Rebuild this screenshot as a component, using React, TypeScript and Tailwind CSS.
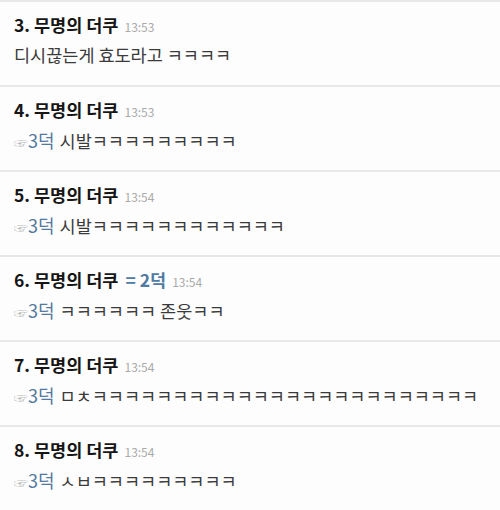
import React from 'react';

type Comment = {
  no: number;
  time: string;
  reply?: string;
  body: string;
};

const comments: Comment[] = [
  { no: 3, time: '13:53', body: '디시끊는게 효도라고 ㅋㅋㅋㅋ' },
  { no: 4, time: '13:53', reply: '3덕', body: '시발ㅋㅋㅋㅋㅋㅋㅋㅋㅋ' },
  { no: 5, time: '13:54', reply: '3덕', body: '시발ㅋㅋㅋㅋㅋㅋㅋㅋㅋㅋㅋㅋ' },
  { no: 6, time: '13:54', reply: '3덕', body: 'ㅋㅋㅋㅋㅋㅋ 존웃ㅋㅋ' },
  { no: 7, time: '13:54', reply: '3덕', body: 'ㅁㅊㅋㅋㅋㅋㅋㅋㅋㅋㅋㅋㅋㅋㅋㅋㅋㅋㅋㅋㅋㅋㅋㅋㅋㅋ' },
  { no: 8, time: '13:54', reply: '3덕', body: 'ㅅㅂㅋㅋㅋㅋㅋㅋㅋㅋㅋ' },
];

const CommentRow: React.FC<{ c: Comment }> = ({ c }) => (
  <div className="h-[85px] border-t-2 border-[#e8e8e8] pl-[14px] pt-[10px]">
    <div className="flex items-baseline leading-[26px]">
      <span className="text-[17.5px] font-bold text-[#161616]">
        {c.no}. 무명의 더쿠
      </span>
      {c.no === 6 && (
        <span className="ml-[7px] text-[17.5px] font-semibold text-[#4f7aa3]">= 2덕</span>
      )}
      <span className="ml-[6px] text-[12px] text-[#aaaaaa]">{c.time}</span>
    </div>
    <div className="mt-[2px] flex items-baseline text-[17.5px] leading-[26px] text-[#3a3a3a]">
      {c.reply && (
        <>
          <span className="text-[14px] text-[#bcbcbc]">☞</span>
          <span className="mr-[5px] text-[18px] text-[#52799f]">{c.reply}</span>
        </>
      )}
      <span>{c.body}</span>
    </div>
  </div>
);

const App: React.FC = () => {
  return (
    <div
      className="flex h-[510px] w-[500px] flex-col overflow-hidden bg-[#fdfdfd]"
      style={{ fontFamily: '"Noto Sans CJK KR", "Noto Sans", sans-serif' }}
    >
      {comments.map((c) => (
        <CommentRow key={c.no} c={c} />
      ))}
    </div>
  );
};

export default App;
